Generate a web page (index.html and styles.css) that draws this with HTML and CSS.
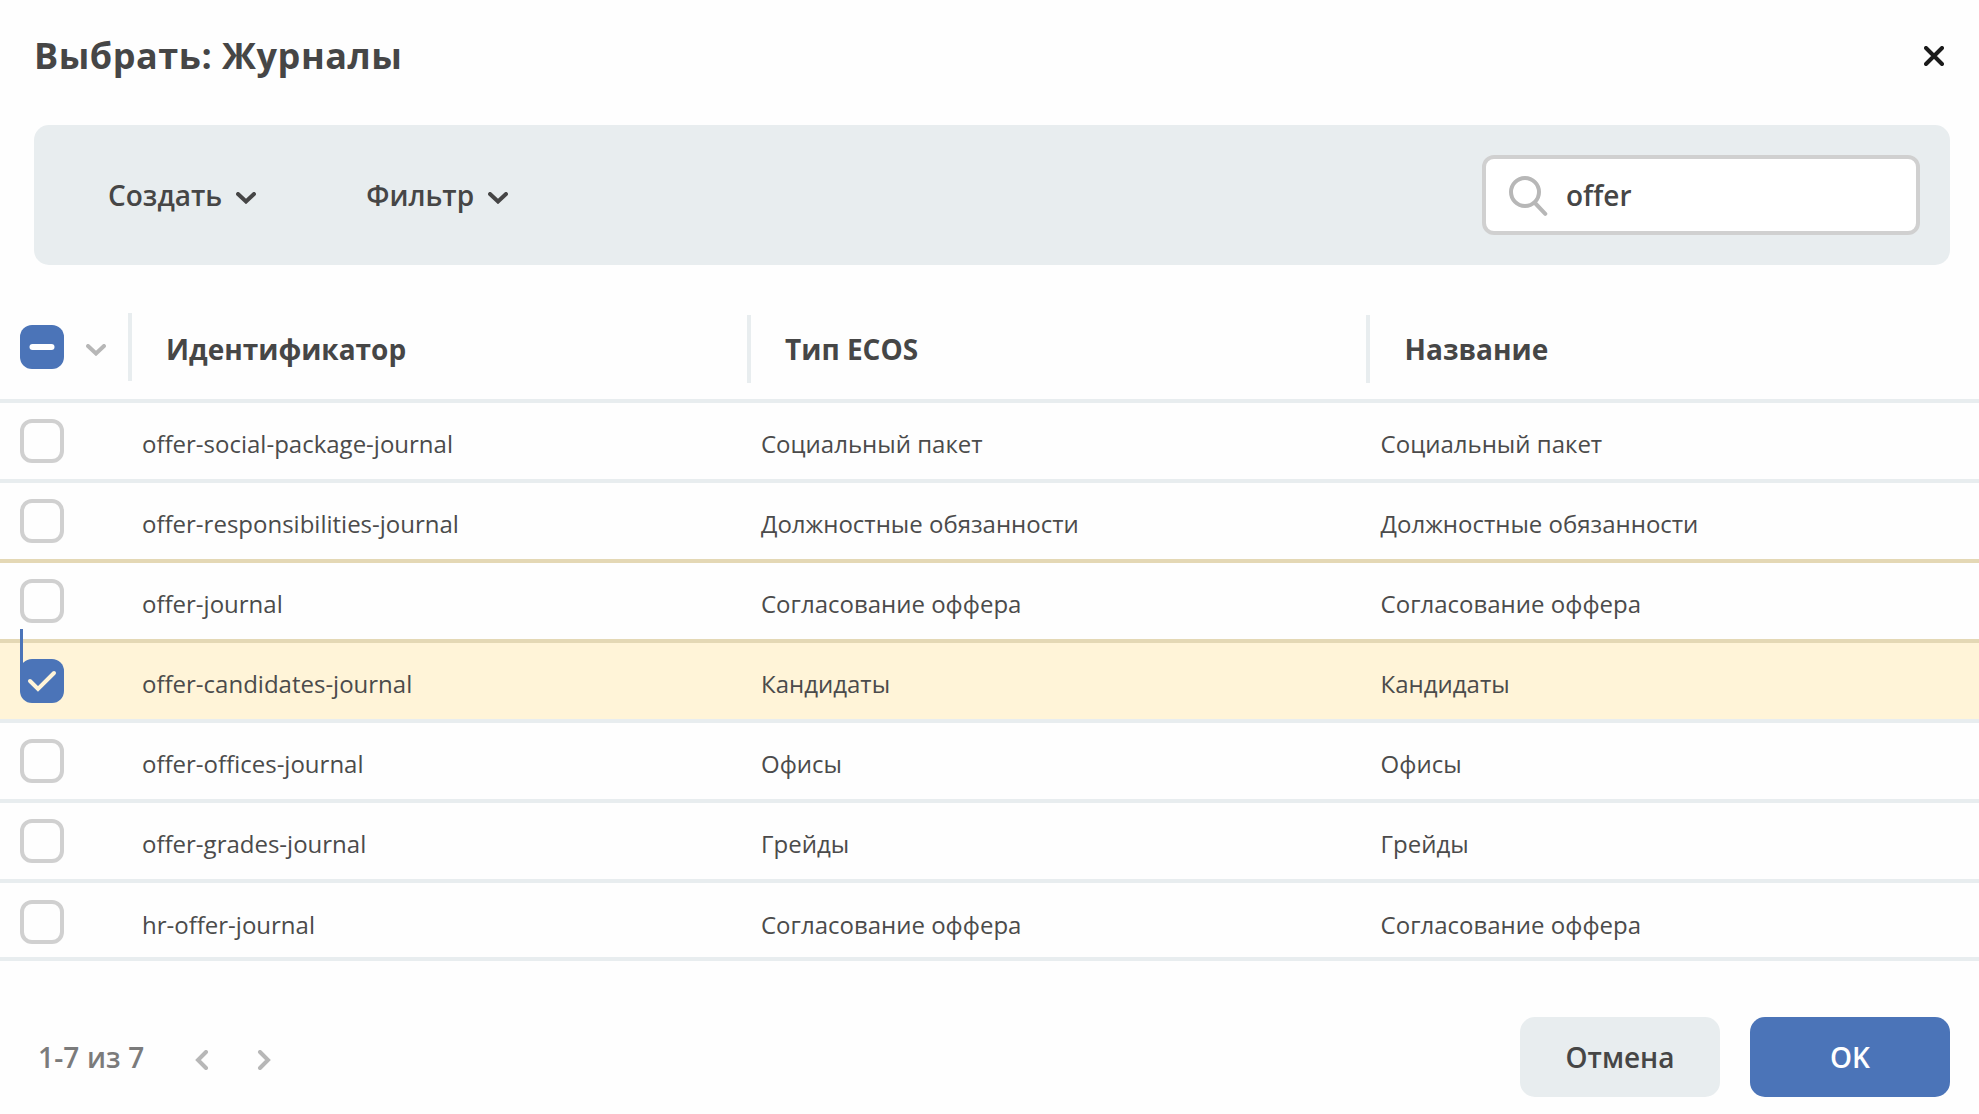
FILE: index.html
```html
<!DOCTYPE html>
<html lang="ru">
<head>
<meta charset="utf-8">
<title>Выбрать: Журналы</title>
<link rel="stylesheet" href="styles.css">
</head>
<body>
<div class="dialog">
  <header class="dialog-header">
    <h1 class="title"><span>Выбрать: Журналы</span></h1>
    <button class="close" aria-label="Закрыть"><svg width="20" height="20" viewBox="0 0 20 20"><path d="M2 2L18 18M18 2L2 18"/></svg></button>
  </header>
  <div class="toolbar">
    <button class="menu create"><span>Создать</span><svg width="20" height="12" viewBox="0 0 20 12"><path d="M2 2L10 9.5L18 2"/></svg></button>
    <button class="menu filter"><span>Фильтр</span><svg width="20" height="12" viewBox="0 0 20 12"><path d="M2 2L10 9.5L18 2"/></svg></button>
    <div class="search">
      <svg width="39" height="40" viewBox="0 0 39 40"><circle cx="16" cy="16" r="14"/><path d="M26 27L36.3 37.8"/></svg>
      <span>offer</span>
    </div>
  </div>
  <div class="grid">
    <div class="row head">
      <div class="select"><span class="box on"><svg width="44" height="44" viewBox="0 0 44 44"><path class="minus" d="M12.5 22H31.5"/></svg></span><svg class="chevron" width="20" height="12" viewBox="0 0 20 12"><path d="M2 2L10 9.5L18 2"/></svg></div>
      <div class="th first"><span>Идентификатор</span></div>
      <div class="th"><span>Тип ECOS</span></div>
      <div class="th"><span>Название</span></div>
    </div>
    <div class="row"><div class="select"><span class="box"></span></div><div class="td"><span>offer-social-package-journal</span></div><div class="td"><span>Социальный пакет</span></div><div class="td"><span>Социальный пакет</span></div></div>
    <div class="row tan"><div class="select"><span class="box"></span></div><div class="td"><span>offer-responsibilities-journal</span></div><div class="td"><span>Должностные обязанности</span></div><div class="td"><span>Должностные обязанности</span></div></div>
    <div class="row tan"><div class="select"><span class="box"></span></div><div class="td"><span>offer-journal</span></div><div class="td"><span>Согласование оффера</span></div><div class="td"><span>Согласование оффера</span></div></div>
    <div class="row selected"><div class="select"><span class="box on marked"><svg width="44" height="44" viewBox="0 0 44 44"><path class="check" d="M10 22L18 30L34 14"/></svg></span></div><div class="td"><span>offer-candidates-journal</span></div><div class="td"><span>Кандидаты</span></div><div class="td"><span>Кандидаты</span></div></div>
    <div class="row"><div class="select"><span class="box"></span></div><div class="td"><span>offer-offices-journal</span></div><div class="td"><span>Офисы</span></div><div class="td"><span>Офисы</span></div></div>
    <div class="row"><div class="select"><span class="box"></span></div><div class="td"><span>offer-grades-journal</span></div><div class="td"><span>Грейды</span></div><div class="td"><span>Грейды</span></div></div>
    <div class="row last"><div class="select"><span class="box"></span></div><div class="td"><span>hr-offer-journal</span></div><div class="td"><span>Согласование оффера</span></div><div class="td"><span>Согласование оффера</span></div></div>
  </div>
  <footer class="footer">
    <span class="range">1-7 из 7</span>
    <button class="page prev" aria-label="Назад"><svg width="14" height="20" viewBox="0 0 14 20"><path d="M11 2L3 10L11 18"/></svg></button>
    <button class="page" aria-label="Вперёд"><svg width="14" height="20" viewBox="0 0 14 20"><path d="M3 2L11 10L3 18"/></svg></button>
    <button class="btn cancel"><span>Отмена</span></button>
    <button class="btn ok"><span>OK</span></button>
  </footer>
</div>
</body>
</html>
```
FILE: styles.css
```css
* { box-sizing: border-box; }
body {
  margin: 0;
  background: #fefefe;
  color: #464646;
  font-family: "Open Sans", "Noto Sans", sans-serif;
  font-size: 28px;
}
button {
  border: 0;
  padding: 0;
  background: none;
  color: inherit;
  font: inherit;
}
svg { display: block; fill: none; stroke: currentColor; stroke-linecap: round; stroke-width: 4; flex: none; }
.dialog { display: flex; flex-direction: column; height: 1114px; overflow: hidden; }
.dialog-header { display: flex; align-items: center; justify-content: space-between; height: 125px; padding: 0 35px 13px 34px; }
.title { margin: 0; font-size: 36px; line-height: 50px; font-weight: 700; letter-spacing: 0.53px; }
.close { color: #1b1b1b; }
.toolbar {
  display: flex;
  align-items: center;
  height: 140px;
  margin: 0 29px 0 34px;
  padding: 0 30px 0 74px;
  border-radius: 15px;
  background: #e8edef;
}
.menu { display: flex; align-items: center; gap: 14px; font-weight: 600; }
.menu svg { margin-top: 6px; }
.menu.filter { margin-left: 110px; }
.search {
  display: flex;
  align-items: center;
  gap: 18px;
  width: 438px;
  height: 80px;
  margin-left: auto;
  padding-left: 23px;
  border: 4px solid #d0d0d0;
  border-radius: 12px;
  background: #fff;
  font-weight: 600;
}
.search svg { margin-top: 1px; color: #b7b7b7; }
.grid { margin-top: 34px; }
.row {
  display: grid;
  grid-template-columns: 128px 619px 619px 1fr;
  height: 80px;
  border-bottom: 4px solid #e8edef;
}
.row.tan { border-color: #e4d8b5; }
.row.selected { background: #fff4d8; }
.row.last { height: 78px; }
.head { height: 104px; }
.select { display: flex; align-items: flex-start; padding: 16px 0 0 20px; }
.last .select { padding-top: 17px; }
.box { width: 44px; height: 44px; border: 4px solid #d0d0d0; border-radius: 12px; }
.box.on { border: 0; background: #4b74b8; color: #fff; }
.minus { stroke-width: 6; }
.marked { position: relative; }
.marked::before { content: ""; position: absolute; left: 0; top: -30px; width: 3px; height: 44px; background: #4b74b8; }
.box .check { stroke: #fff4d8; }
.head .select { padding-top: 26px; }
.chevron { margin: 19px 0 0 22px; color: #b7b7b7; }
.th {
  height: 68px;
  margin-top: 16px;
  padding-left: 34px;
  border-left: 4px solid #e8edef;
  font-weight: 700;
  line-height: 69px;
}
.th.first { margin-top: 14px; line-height: 73px; }
.th:last-child { padding-left: 34.6px; }
.td { padding-left: 14px; color: #4b4b4b; font-size: 24px; line-height: 81px; }
.td:last-child { padding-left: 14.6px; }
.last .td { line-height: 83px; }
.footer { display: flex; align-items: center; padding: 56px 29px 0 38px; font-weight: 600; }
.range { color: #7b7b7b; letter-spacing: 0.15px; }
.page { margin: 5px 0 0 48px; color: #b7b7b7; }
.page.prev { margin-left: 51px; }
.btn { width: 200px; height: 80px; border-radius: 15px; }
.cancel { margin-left: auto; background: #e8edef; }
.ok { margin-left: 30px; background: #4b74b8; color: #fff; }
```
